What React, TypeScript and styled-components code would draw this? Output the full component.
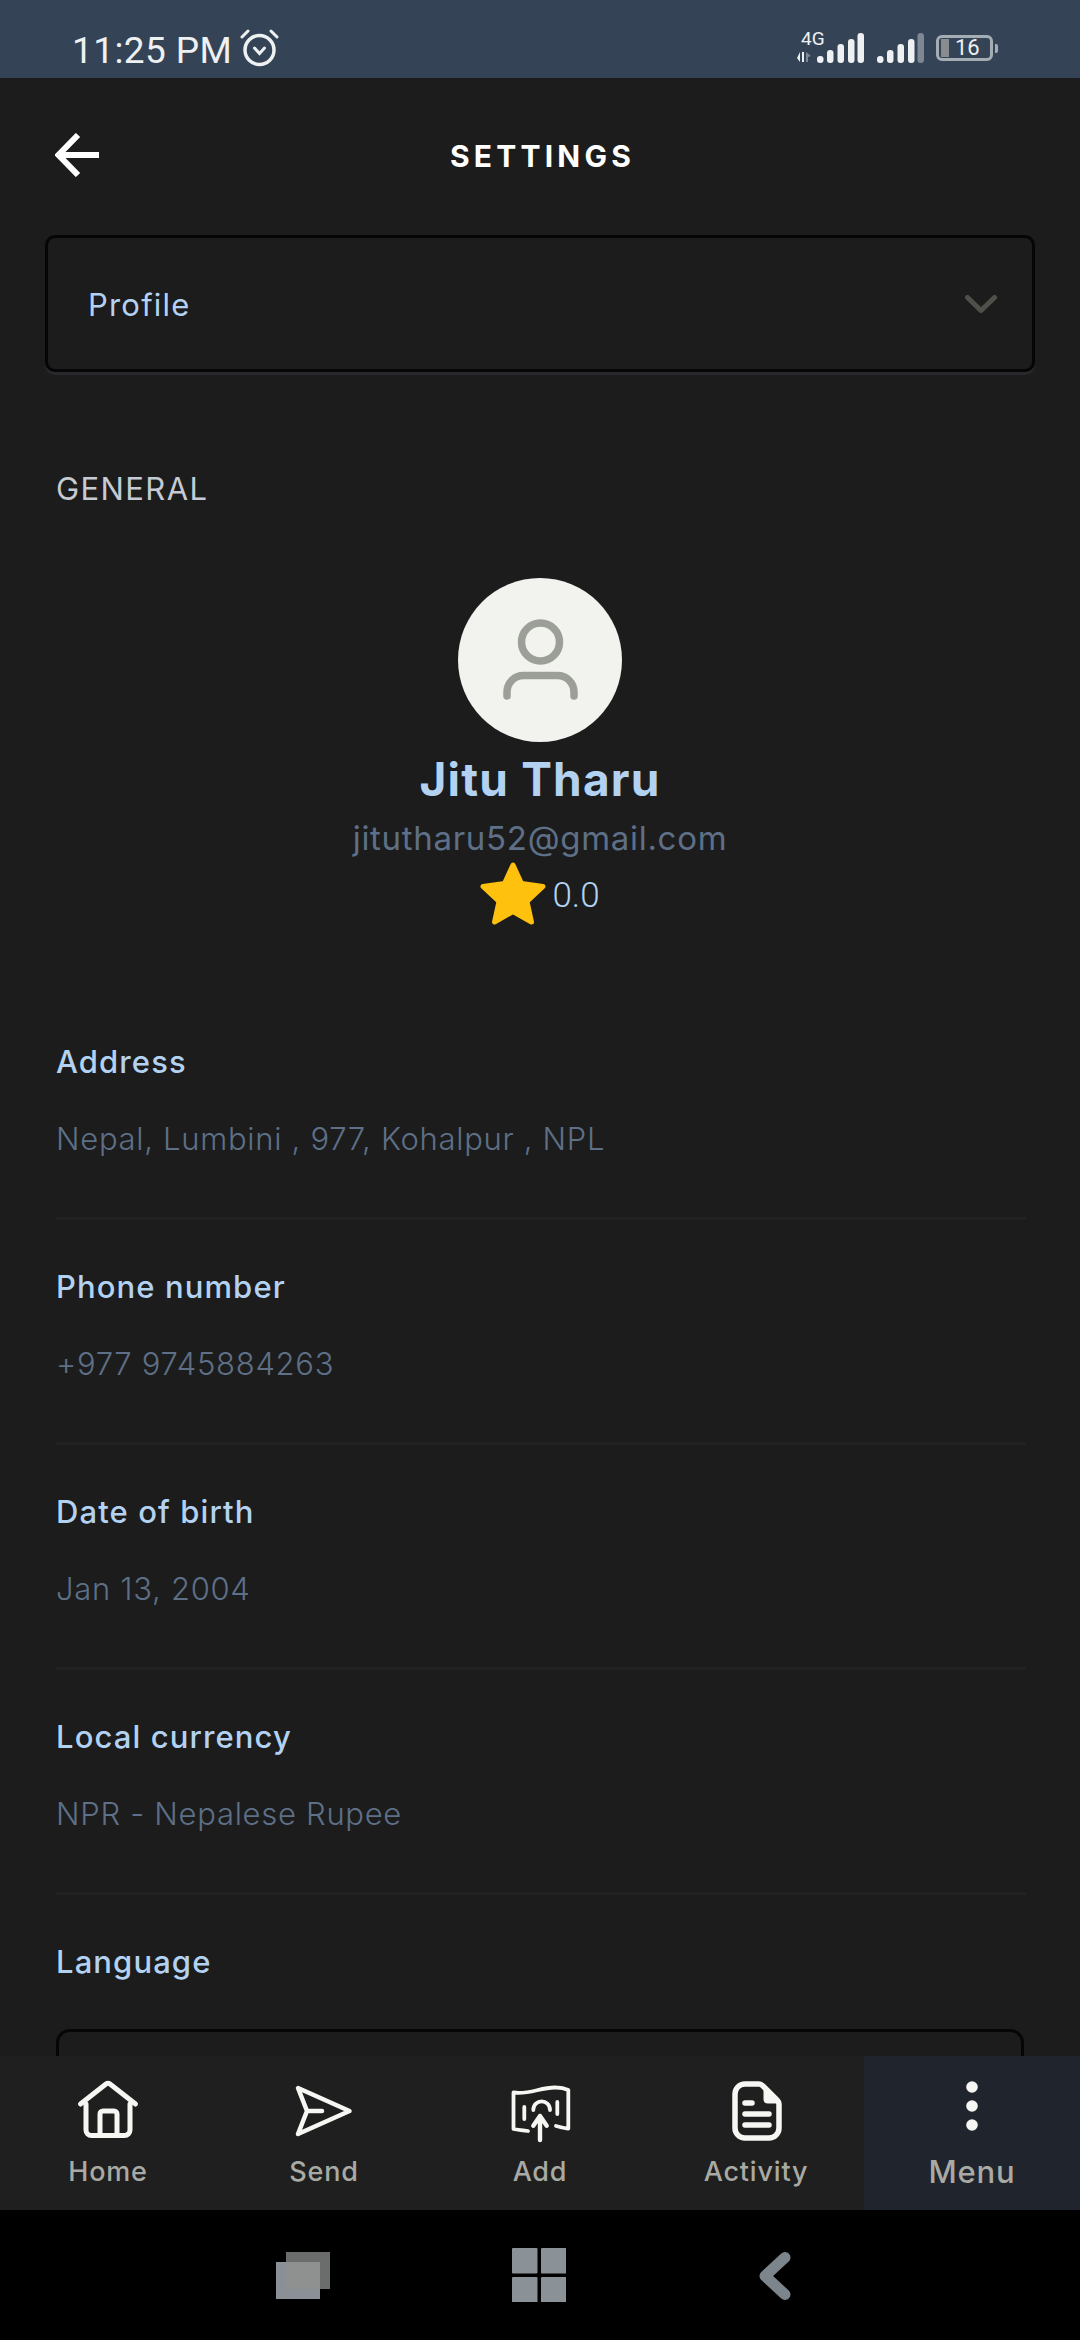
import React, { FC } from "react";
import styled, { createGlobalStyle } from "styled-components";

const GlobalStyle = createGlobalStyle`
    html, body {
        margin: 0;
        padding: 0;
        background: #1c1c1c;
    }
`

const Page = styled.div`
    width: 1080px;
    height: 2340px;
    display: flex;
    flex-direction: column;
    overflow: hidden;
    background: #1c1c1c;
    font-family: "Inter", "Noto Sans", sans-serif;
`

const StatusBar = styled.div`
    height: 78px;
    flex-shrink: 0;
    box-sizing: border-box;
    padding: 0 87px 0 72px;
    display: flex;
    justify-content: space-between;
    background: #344456;
    color: #eef0f2;
    font-family: "Roboto", sans-serif;
`

const StatusLeft = styled.div`
    display: flex;
    align-items: center;
    gap: 8px;
    padding-top: 18px;
`

const Clock = styled.span`
    font-size: 37px;
    line-height: 42px;
    letter-spacing: 0.4px;
    padding-top: 6px;
`

const StatusRight = styled.div`
    display: flex;
    align-items: flex-start;
    padding-top: 33px;
    gap: 12px;
`

const NetworkGroup = styled.div`
    position: relative;
    width: 127px;
    height: 30px;
`

const NetworkTag = styled.span`
    position: absolute;
    left: 4px;
    top: -3px;
    font-size: 19px;
    line-height: 18px;
`

const Battery = styled.div`
    position: relative;
    width: 57px;
    height: 26px;
    margin-top: 2px;
    box-sizing: border-box;
    border: 3px solid #a4acb4;
    border-radius: 6px;
    display: flex;
    align-items: center;
    padding-left: 2px;
    gap: 6px;
    &::after {
        content: "";
        position: absolute;
        right: -8px;
        top: 6px;
        width: 3px;
        height: 9px;
        border-radius: 0 2px 2px 0;
        background: #a4acb4;
    }
`

const BatteryFill = styled.div`
    width: 8px;
    height: 18px;
    background: #888c8f;
`

const BatteryLevel = styled.span`
    font-size: 22px;
    line-height: 20px;
`

const Main = styled.div`
    flex: 1;
    min-height: 0;
    overflow: hidden;
`

const Header = styled.div`
    display: grid;
    grid-template-columns: 1fr auto 1fr;
    align-items: center;
    height: 54px;
    margin-top: 50px;
    padding-left: 55px;
`

const Title = styled.div`
    color: #fff;
    font-size: 30px;
    font-weight: 700;
    letter-spacing: 4.2px;
    line-height: 36px;
    margin-left: -50px;
    padding-top: 2px;
`

const SelectBox = styled.div<{ $side: number; $right: number; $height: number }>`
    box-sizing: border-box;
    height: ${p => p.$height}px;
    margin: 0 ${p => p.$right}px 0 ${p => p.$side}px;
    border: 3px solid #060606;
    border-radius: 10px;
    display: flex;
    align-items: center;
    justify-content: space-between;
    padding: 0 35px 0 40px;
`

const ProfileSelect = styled(SelectBox)`
    margin-top: 53px;
    box-shadow: 0 3px 0 #29292d;
`

const SelectLabel = styled.span`
    color: #b3d2f2;
    font-size: 31px;
    line-height: 36px;
    letter-spacing: 1.2px;
    padding-top: 2px;
`

const SectionTitle = styled.div`
    margin: 99px 0 0 56px;
    color: #c5cad3;
    font-size: 31px;
    line-height: 36px;
    letter-spacing: 1.4px;
`

const Profile = styled.div`
    margin-top: 71px;
    display: flex;
    flex-direction: column;
    align-items: center;
`

const Avatar = styled.div`
    width: 164px;
    height: 164px;
    border-radius: 50%;
    background: #f2f3ee;
`

const Name = styled.div`
    margin-top: 11px;
    color: #b3d2f2;
    font-size: 46px;
    font-weight: 700;
    line-height: 52px;
    letter-spacing: 1.2px;
`

const Email = styled.div`
    margin-top: 13px;
    color: #5e7087;
    font-size: 33px;
    line-height: 40px;
    letter-spacing: 0.7px;
`

const Rating = styled.div`
    margin-top: 4px;
    display: flex;
    align-items: center;
    gap: 6px;
`

const RatingValue = styled.span`
    color: #b3d2f2;
    font-family: "Roboto", sans-serif;
    font-size: 35px;
    font-weight: 300;
    line-height: 40px;
    padding-top: 4px;
`

const Fields = styled.div`
    margin: 119px 54px 0 56px;
`

const Field = styled.div`
    padding-bottom: 60px;
    margin-bottom: 49px;
    border-bottom: 3px solid #222222;
`

const FieldLabel = styled.div`
    color: #b3d2f2;
    font-size: 31px;
    font-weight: 500;
    line-height: 36px;
    letter-spacing: 1.1px;
`

const FieldValue = styled.div`
    margin-top: 41px;
    color: #5e7087;
    font-size: 31px;
    font-weight: 300;
    line-height: 36px;
    letter-spacing: 0.7px;
`

const LanguageSelect = styled(SelectBox)`
    margin-top: 49px;
    border-radius: 14px;
`

const NavBar = styled.div`
    height: 154px;
    flex-shrink: 0;
    display: grid;
    grid-template-columns: repeat(5, 1fr);
    background: #1f1f1f;
`

const NavItem = styled.div<{ $active?: boolean }>`
    display: flex;
    flex-direction: column;
    align-items: center;
    padding-top: 20px;
    background: ${p => (p.$active ? "#20252d" : "transparent")};
`

const NavIcon = styled.svg`
    width: 70px;
    height: 70px;
    display: block;
    fill: none;
    stroke: #f6f6f3;
    stroke-linecap: round;
    stroke-linejoin: round;
`

const NavLabel = styled.span<{ $active?: boolean }>`
    margin-top: 10px;
    color: #a9aaa4;
    font-size: ${p => (p.$active ? 31 : 27)}px;
    font-weight: 500;
    line-height: 32px;
    letter-spacing: ${p => (p.$active ? 0.8 : 0.8)}px;
`

const SystemBar = styled.div`
    height: 130px;
    flex-shrink: 0;
    background: #000;
    display: grid;
    grid-template-columns: 276px 236px 247px 1fr;
`

const SystemIcon = styled.svg<{ $column: number; $top: number }>`
    grid-column: ${p => p.$column};
    display: block;
    margin-top: ${p => p.$top}px;
`

const navItems = ["Home", "Send", "Add", "Activity", "Menu"]

const navIcons: Record<string, React.ReactNode> = {
    Home: (
        <g strokeWidth="5">
            <path d="M7.5 28 L33 8 Q35 6.5 37 8 L62.5 28" />
            <path d="M13 28 V54 a5.5 5.5 0 0 0 5.5 5.5 H51.5 a5.5 5.5 0 0 0 5.5 -5.5 V28" />
            <path d="M27 59 V38 a3 3 0 0 1 3 -3 h11 a3 3 0 0 1 3 3 V59" />
        </g>
    ),
    Send: (
        <path strokeWidth="4.5" d="M9 12 L60.5 35 L9 58 L18 35 Z M18 35 H33" />
    ),
    Add: (
        <g strokeWidth="3.8">
            <path d="M23 55 C17 54 13 54 8.5 53 V16.5 C24 19 36 11 51 11.5 C56 11.5 60 12.5 63.3 14 V52.5 C59 52.5 55 51 51 50" />
            <path d="M19.3 31 V43 M52.3 26 V38" />
            <path d="M28.3 34 C28.3 22.5 45 22.5 45 34" />
            <path strokeWidth="4.4" d="M28.3 49.7 L35 40 L41.7 49.7 M35 40 V64" />
        </g>
    ),
    Activity: (
        <g strokeWidth="5.5">
            <path d="M24 8 H38 Q40 8 42 10 L56 24 Q58 26 58 28 V52 a10 10 0 0 1 -10 10 H24 a10 10 0 0 1 -10 -10 V18 a10 10 0 0 1 10 -10 Z" />
            <path fill="#f6f6f3" strokeWidth="3" d="M44 11 L56 26 H47 Q44 26 44 23 Z" />
            <path d="M24 27 H31 M24 38 H48 M24 49 H48" />
        </g>
    ),
    Menu: (
        <g fill="#f6f6f3" stroke="none">
            <circle cx="35" cy="11" r="5.8" />
            <circle cx="35" cy="30" r="5.8" />
            <circle cx="35" cy="49" r="5.8" />
        </g>
    ),
}

const fields = [
    { label: "Address", value: "Nepal, Lumbini , 977, Kohalpur , NPL" },
    { label: "Phone number", value: "+977 9745884263" },
    { label: "Date of birth", value: "Jan 13, 2004" },
    { label: "Local currency", value: "NPR - Nepalese Rupee" },
]

const bars = [
    { x: 0, y: 23 }, { x: 10, y: 17 }, { x: 20.5, y: 11 }, { x: 31, y: 6 }, { x: 40.5, y: 0 },
]

const App: FC = () => {
    return (
        <Page>
            <GlobalStyle />
            <StatusBar>
                <StatusLeft>
                    <Clock>11:25 PM</Clock>
                    <svg width="39" height="38" viewBox="0 0 39 38" fill="none" stroke="#eef0f2" strokeLinecap="round">
                        <circle cx="19.5" cy="21" r="14.5" strokeWidth="3.5" />
                        <path d="M2 8 L8 2 M37 8 L31 2" strokeWidth="3" />
                        <path d="M14.5 19 L19.5 24.5 L24.5 19" strokeWidth="3" />
                    </svg>
                </StatusLeft>
                <StatusRight>
                    <NetworkGroup>
                        <NetworkTag>4G</NetworkTag>
                        <svg width="127" height="30" viewBox="0 0 127 30">
                            <path d="M3 19 V29 L0 25 Z M5 19 H7 V29 H5 Z" fill="#eef0f2" />
                            <path d="M9 19 V29 H11 V24 L14 23 Z" fill="#7d8894" />
                            {bars.map(b => (
                                <rect key={b.x} x={20 + b.x} y={b.y} width="6.5" height={30 - b.y} rx="3" fill="#eef0f2" />
                            ))}
                            {bars.map((b, i) => (
                                <rect key={b.x} x={80 + b.x} y={b.y} width="6.5" height={30 - b.y} rx="3" fill={i === 4 ? "#7d8894" : "#eef0f2"} />
                            ))}
                        </svg>
                    </NetworkGroup>
                    <Battery>
                        <BatteryFill />
                        <BatteryLevel>16</BatteryLevel>
                    </Battery>
                </StatusRight>
            </StatusBar>

            <Main>
                <Header>
                    <svg width="44" height="44" viewBox="0 0 44 44" fill="none" stroke="#fff" strokeWidth="6">
                        <path d="M44 22 H4 M23 2 L3.5 22 L23 42" />
                    </svg>
                    <Title>SETTINGS</Title>
                </Header>

                <ProfileSelect $side={45} $right={45} $height={137}>
                    <SelectLabel>Profile</SelectLabel>
                    <svg width="32" height="18" viewBox="0 0 32 18" fill="none" stroke="#4f504a" strokeWidth="5" strokeLinecap="round">
                        <path d="M2.5 2.5 L16 15.5 L29.5 2.5" />
                    </svg>
                </ProfileSelect>

                <SectionTitle>GENERAL</SectionTitle>

                <Profile>
                    <Avatar>
                        <svg width="164" height="164" viewBox="0 0 164 164" fill="none" stroke="#9c9e98" strokeWidth="7.5" strokeLinecap="round">
                            <circle cx="82.5" cy="64" r="19" />
                            <path d="M49 118 V114 a16.5 16.5 0 0 1 16.5 -16.5 H99.5 a16.5 16.5 0 0 1 16.5 16.5 V118" />
                        </svg>
                    </Avatar>
                    <Name>Jitu Tharu</Name>
                    <Email>jitutharu52@gmail.com</Email>
                    <Rating>
                        <svg width="66" height="63" viewBox="0 0 66 63" fill="#fec20e" stroke="#fec20e" strokeWidth="5" strokeLinejoin="round">
                            <path d="M33 3 L41.5 21.5 L63 24.5 L47 39.5 L51.5 60 L33 49.5 L14.5 60 L19 39.5 L3 24.5 L24.5 21.5 Z" />
                        </svg>
                        <RatingValue>0.0</RatingValue>
                    </Rating>
                </Profile>

                <Fields>
                    {fields.map(f => (
                        <Field key={f.label}>
                            <FieldLabel>{f.label}</FieldLabel>
                            <FieldValue>{f.value}</FieldValue>
                        </Field>
                    ))}
                    <FieldLabel>Language</FieldLabel>
                </Fields>
                <LanguageSelect $side={56} $right={56} $height={137} />
            </Main>

            <NavBar>
                {navItems.map(name => (
                    <NavItem key={name} $active={name === "Menu"}>
                        <NavIcon viewBox="0 0 70 70">{navIcons[name]}</NavIcon>
                        <NavLabel $active={name === "Menu"}>{name}</NavLabel>
                    </NavItem>
                ))}
            </NavBar>

            <SystemBar>
                <SystemIcon $column={2} $top={42} width="54" height="47" viewBox="0 0 54 47">
                    <rect x="10" y="0" width="44" height="37" fill="#6b6d6d" />
                    <rect x="0" y="10" width="44" height="37" fill="#8a9095" />
                    <rect x="10" y="10" width="34" height="27" fill="#8f9191" />
                </SystemIcon>
                <SystemIcon $column={3} $top={38} width="54" height="54" viewBox="0 0 54 54">
                    <rect x="0" y="0" width="25.5" height="25.5" rx="1" fill="#8b9297" />
                    <rect x="29" y="0" width="25.5" height="25.5" rx="1" fill="#8b9297" />
                    <rect x="0" y="29" width="25.5" height="25.5" rx="1" fill="#8b9297" />
                    <rect x="29" y="29" width="25.5" height="25.5" rx="1" fill="#8b9297" />
                </SystemIcon>
                <SystemIcon $column={4} $top={42} width="32" height="48" viewBox="0 0 32 48" fill="none" stroke="#7c858b" strokeWidth="11" strokeLinecap="round" strokeLinejoin="round">
                    <path d="M26 5.5 L6 24 L26 42.5" />
                </SystemIcon>
            </SystemBar>
        </Page>
    )
}

export default App
